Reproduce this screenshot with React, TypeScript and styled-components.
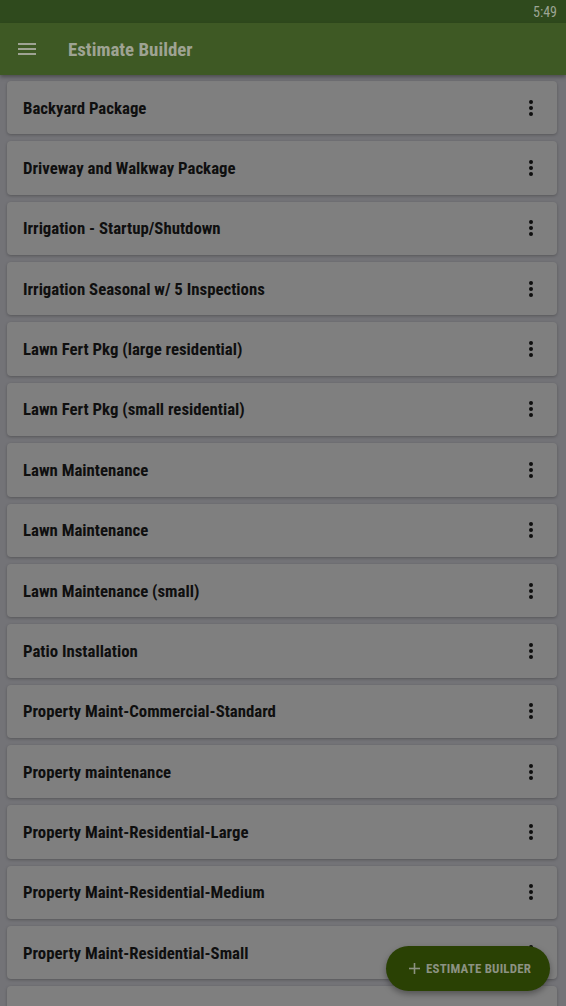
import styled, { createGlobalStyle } from "styled-components";

const GlobalStyle = createGlobalStyle`
    html, body {
        margin: 0;
        padding: 0;
        background: #737377;
    }
    * {
        box-sizing: border-box;
    }
`;

const Screen = styled.div`
    width: 566px;
    height: 1006px;
    display: flex;
    flex-direction: column;
    overflow: hidden;
    position: relative;
    background: #737377;
    font-family: "Roboto", "Liberation Sans", sans-serif;
    font-stretch: condensed;
`;

const StatusBar = styled.div`
    height: 23px;
    flex-shrink: 0;
    display: flex;
    align-items: center;
    justify-content: flex-end;
    padding: 0 9px;
    background: #2f4a1d;
    color: #9ca594;
    font-size: 14px;
`;

const AppBar = styled.header`
    height: 52px;
    flex-shrink: 0;
    display: flex;
    align-items: center;
    gap: 32px;
    padding: 0 18px;
    background: #3e5924;
    box-shadow: 0 2px 4px rgba(0, 0, 0, 0.35);
    position: relative;
    z-index: 1;
`;

const Title = styled.h1`
    margin: 0;
    font-size: 18.9px;
    font-weight: 700;
    color: #9ea393;
`;

const List = styled.main`
    flex: 1;
    display: flex;
    flex-direction: column;
    gap: 7px;
    padding: 6px 9px 0 7px;
`;

const Card = styled.div`
    height: 53.36px;
    flex-shrink: 0;
    display: flex;
    align-items: center;
    justify-content: space-between;
    padding: 0 14px 0 16px;
    background: #7f7f7f;
    border-radius: 4px;
    box-shadow: 0 1px 3px rgba(0, 0, 0, 0.25);
`;

const CardTitle = styled.span`
    font-size: 16.8px;
    font-weight: 700;
    color: #0f0f0f;
`;

const MenuButton = styled.button`
    border: none;
    background: none;
    padding: 0;
    width: 24px;
    height: 24px;
    display: flex;
    align-items: center;
    justify-content: center;
`;

const Fab = styled.button`
    position: absolute;
    left: 386px;
    top: 946px;
    width: 164px;
    height: 45px;
    border: none;
    border-radius: 23px;
    background: #2a4104;
    display: flex;
    align-items: center;
    justify-content: center;
    gap: 6px;
    padding: 0 13px 0 17px;
    box-shadow: 0 3px 6px rgba(0, 0, 0, 0.35);
    color: #8c9282;
    font-family: inherit;
    font-stretch: condensed;
    font-size: 12.9px;
    font-weight: 700;
    letter-spacing: 0.2px;
`;

const items = [
    "Backyard Package",
    "Driveway and Walkway Package",
    "Irrigation - Startup/Shutdown",
    "Irrigation Seasonal w/ 5 Inspections",
    "Lawn Fert Pkg (large residential)",
    "Lawn Fert Pkg (small residential)",
    "Lawn Maintenance",
    "Lawn Maintenance",
    "Lawn Maintenance (small)",
    "Patio Installation",
    "Property Maint-Commercial-Standard",
    "Property maintenance",
    "Property Maint-Residential-Large",
    "Property Maint-Residential-Medium",
    "Property Maint-Residential-Small",
];

function DotsIcon() {
    return (
        <svg width="4" height="16" viewBox="0 0 4 16">
            <circle cx="2" cy="2" r="2" fill="#0f0f0f" />
            <circle cx="2" cy="8" r="2" fill="#0f0f0f" />
            <circle cx="2" cy="14" r="2" fill="#0f0f0f" />
        </svg>
    );
}

function MenuIcon() {
    return (
        <svg width="18" height="12" viewBox="0 0 18 12">
            <rect y="0" width="18" height="2" fill="#9ea393" />
            <rect y="5" width="18" height="2" fill="#9ea393" />
            <rect y="10" width="18" height="2" fill="#9ea393" />
        </svg>
    );
}

export default function App() {
    return (
        <>
            <GlobalStyle />
            <Screen>
                <StatusBar>5:49</StatusBar>
                <AppBar>
                    <MenuIcon />
                    <Title>Estimate Builder</Title>
                </AppBar>
                <List>
                    {items.map((name, i) => (
                        <Card key={i}>
                            <CardTitle>{name}</CardTitle>
                            <MenuButton>
                                <DotsIcon />
                            </MenuButton>
                        </Card>
                    ))}
                    <Card />
                </List>
                <Fab>
                    <svg width="11" height="11" viewBox="0 0 11 11">
                        <rect x="4.7" y="0" width="1.6" height="11" fill="#8c9282" />
                        <rect x="0" y="4.7" width="11" height="1.6" fill="#8c9282" />
                    </svg>
                    ESTIMATE BUILDER
                </Fab>
            </Screen>
        </>
    );
}
